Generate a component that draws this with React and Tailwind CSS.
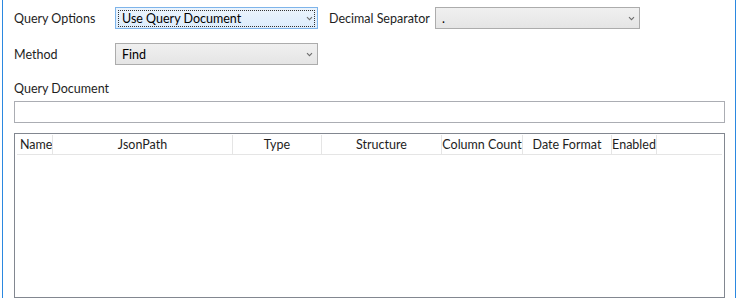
import React from "react";

const font = { fontFamily: 'Lato, "Noto Sans", sans-serif' };

function Chevron() {
  return (
    <svg width="7" height="5" viewBox="0 0 7 5" className="shrink-0">
      <path d="M1 1.2 L3.5 3.7 L6 1.2" fill="none" stroke="#6d6d6d" strokeWidth="1.1" />
    </svg>
  );
}

function Combo({ value, focused, w }) {
  return (
    <div
      className={`h-[22px] ${w} border flex items-center shrink-0 ${
        focused
          ? "border-[#7eb4ea] bg-gradient-to-b from-[#ecf4fc] to-[#dcecfc]"
          : "border-[#acacac] bg-gradient-to-b from-[#f0f0f0] to-[#e5e5e5]"
      }`}
    >
      <div
        className={`flex-1 h-[17px] mx-[2px] flex items-center justify-between pl-[3px] pr-[1px] ${
          focused ? "border border-dotted border-[#333]" : "border border-transparent"
        }`}
      >
        <span className="text-[12.5px] leading-none text-black pt-[2px]">{value}</span>
        <Chevron />
      </div>
    </div>
  );
}

const cols = [
  ["Name", 36, "left"],
  ["JsonPath", 180],
  ["Type", 89],
  ["Structure", 120],
  ["Column Count", 81],
  ["Date Format", 89],
  ["Enabled", 45],
];

export default function App() {
  return (
    <div className="w-[738px] h-[298px] overflow-hidden bg-white pl-[2px] text-[12.5px] text-[#1e1e1e]" style={font}>
      <div className="w-[734px] h-full border-x border-[#2b88e0] pl-[11px] pt-[7px] flex flex-col">
        <div className="flex items-center h-[22px]">
          <div className="w-[101px] shrink-0 pt-[2px]">Query Options</div>
          <Combo value="Use Query Document" focused w="w-[203px]" />
          <div className="w-[117px] pl-[11px] shrink-0 pt-[2px]">Decimal Separator</div>
          <Combo value="." w="w-[205px]" />
        </div>
        <div className="flex items-center h-[22px] mt-[14px]">
          <div className="w-[101px] shrink-0 pt-[2px]">Method</div>
          <Combo value="Find" w="w-[203px]" />
        </div>
        <div className="mt-[16px] h-[16px] leading-[16px]">Query Document</div>
        <div className="mt-[4px] h-[22px] w-[711px] border border-[#abadb3] bg-white" />
        <div className="mt-[10px] w-[711px] flex-1 border border-[#828790] bg-white px-[2px] pt-[1px]">
          <div className="flex h-[20px] border-b border-[#e5e5e5]">
            {cols.map(([t, w, a]) => (
              <div
                key={t}
                className={`h-full flex items-center pt-[2px] border-r border-[#e5e5e5] overflow-hidden whitespace-nowrap shrink-0 ${
                  a === "left" ? "justify-start pl-[3px]" : "justify-center"
                }`}
                style={{ width: w }}
              >
                {t}
              </div>
            ))}
            <div className="flex-1" />
          </div>
        </div>
      </div>
    </div>
  );
}
